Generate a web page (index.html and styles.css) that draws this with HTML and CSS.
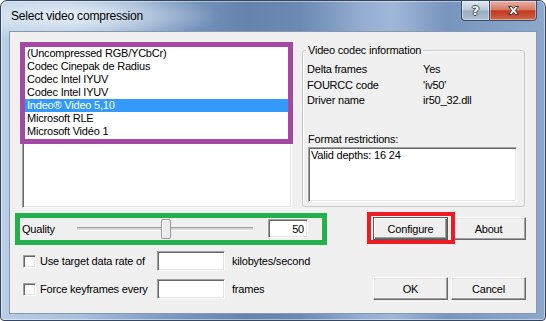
FILE: index.html
```html
<!DOCTYPE html>
<html lang="en">
<head>
  <meta charset="UTF-8">
  <title>Select video compression</title>
  <link rel="stylesheet" href="styles.css">
</head>
<body>

<div class="window">
  <div class="titlebar">
    <span class="title">Select video compression</span>
    <div class="caption-btns">
      <span class="cap help">?</span>
      <span class="cap close">
        <svg width="13" height="11" viewBox="0 0 13 11">
          <path d="M1.5 1.5 H4.8 L6.5 3.8 L8.2 1.5 H11.5 L8.3 5.5 L11.5 9.5 H8.2 L6.5 7.2 L4.8 9.5 H1.5 L4.7 5.5 Z" fill="#fff" stroke="#3b3b3b" stroke-width="1" stroke-linejoin="round"/>
        </svg>
      </span>
    </div>
  </div>

  <div class="client">
    <div class="top">
      <div class="list-wrap">
        <ul class="listbox">
          <li>(Uncompressed RGB/YCbCr)</li>
          <li>Codec Cinepak de Radius</li>
          <li>Codec Intel IYUV</li>
          <li>Codec Intel IYUV</li>
          <li class="selected">Indeo® Video 5,10</li>
          <li>Microsoft RLE</li>
          <li>Microsoft Vidéo 1</li>
        </ul>
        <div class="mark mark-purple"></div>
      </div>

      <fieldset class="group">
        <legend>Video codec information</legend>
        <div class="info">
          <span>Delta frames</span><span>Yes</span>
          <span>FOURCC code</span><span>'iv50'</span>
          <span>Driver name</span><span>ir50_32.dll</span>
        </div>
        <div class="restrict-label">Format restrictions:</div>
        <div class="restrict-box">Valid depths: 16 24</div>
      </fieldset>
    </div>

    <div class="mid">
      <div class="quality">
        <span class="q-label">Quality</span>
        <div class="slider">
          <div class="track"></div>
          <div class="thumb"></div>
        </div>
        <div class="edit num">50</div>
        <div class="mark mark-green"></div>
      </div>
      <div class="btn-row">
        <div class="configure-wrap">
          <button class="btn default">Configure</button>
          <div class="mark mark-red"></div>
        </div>
        <button class="btn">About</button>
      </div>
    </div>

    <div class="bottom">
      <div class="opts">
        <label class="chk"><span class="box"></span>Use target data rate of</label>
        <div class="edit"></div>
        <span class="unit">kilobytes/second</span>
        <label class="chk"><span class="box"></span>Force keyframes every</label>
        <div class="edit"></div>
        <span class="unit">frames</span>
      </div>
      <div class="btn-row end">
        <button class="btn">OK</button>
        <button class="btn">Cancel</button>
      </div>
    </div>
  </div>
</div>

</body>
</html>
```

FILE: styles.css
```css
body { margin: 0; background: #fff; font-family: "Liberation Sans", Arial, sans-serif; font-size: 11px; letter-spacing: -0.2px; color: #000; }

/* window frame */
.window {
  width: 544px; height: 319px; border: 1px solid #34465f; border-radius: 7px 7px 4px 4px;
  display: flex; flex-direction: column;
  background:
    radial-gradient(ellipse 150px 26px at 70px 15px, rgba(235,242,250,.95), rgba(235,242,250,0) 100%),
    linear-gradient(90deg, #b9cde5 0, #a9c0dd 14%, #7d9bc2 30%, #6583ad 45%, #6b89b2 55%, #93acd0 66%, #a0b8d8 72%, #7895bd 82%, #8ca8cb 100%);
  box-shadow: inset 0 0 0 1px rgba(255,255,255,.45);
}
.titlebar { height: 30px; display: flex; padding: 0 8px 0 10px; }
.title { font-size: 12px; line-height: 31px; color: #000; }
.caption-btns { margin-left: auto; margin-top: -1px; display: flex; height: 21px; }
.cap { height: 19px; display: flex; align-items: center; justify-content: center; border: 1px solid #3a4d68; box-shadow: inset 0 0 0 1px rgba(255,255,255,.4); }
.help {
  width: 27px; border-right: none; border-radius: 0 0 0 4px;
  background: linear-gradient(#dfe7f0, #bac8d8 48%, #9cadc3 52%, #adbdd0);
  color: #fff; font: bold 13px "DejaVu Sans", sans-serif;
  text-shadow: 1px 0 #404850, -1px 0 #404850, 0 1px #404850, 0 -1px #404850;
}
.close {
  width: 46px; border-radius: 0 0 4px 0;
  background: linear-gradient(#eab0a3, #d77d66 45%, #c1391f 52%, #d06448);
}

.client {
  flex: 1; margin: 0 8px 6px 8px; background: #f0f0f0; border: 1px solid #8797ad;
  padding: 12px 10px 0 12px;
}

/* annotation boxes drawn on top of the dialog */
.mark { position: absolute; pointer-events: none; }
.mark-purple { left: -2px; top: -2px; width: 263px; height: 92px; border: 5px solid #a349a4; }
.mark-green { left: -7px; top: -4px; width: 302px; height: 22px; border: 5px solid #22b14c; }
.mark-red { left: -6px; top: -5px; width: 80px; height: 24px; border: 4px solid #ed1c24; }

/* sunken edges */
.listbox, .restrict-box, .edit, .box {
  background: #fff;
  border-top: 1px solid #a0a0a0; border-left: 1px solid #a0a0a0;
  border-bottom: 1px solid #fff; border-right: 1px solid #fff;
  box-shadow: inset 1px 1px #696969, inset -1px -1px #e3e3e3;
}

.top { display: flex; gap: 10px; height: 164px; }
.list-wrap { position: relative; }
.listbox { margin: 0; list-style: none; box-sizing: border-box; width: 270px; height: 164px; padding: 2px; }
.listbox li { line-height: 13px; padding-left: 2px; white-space: nowrap; }
.listbox li.selected { background: #3399ff; color: #fff; }

.group {
  margin: 0; padding: 0 4px 4px; width: 223px; box-sizing: border-box; align-self: flex-start;
  border: 1px solid #c9c9c9; border-radius: 3px; box-shadow: inset 1px 1px #fff;
}
.group legend { padding: 0 2px; margin-left: -1px; line-height: 13px; }
.info { display: grid; grid-template-columns: 116px auto; line-height: 15.5px; margin-top: 5px; }
.restrict-label { margin-top: 24px; line-height: 13px; margin-left: 1px; }
.restrict-box { margin: 1.5px 0 0 1px; width: 209px; height: 55px; box-sizing: border-box; padding: 1px 2px; line-height: 13px; }

.mid { display: flex; justify-content: space-between; margin-top: 9px; height: 23px; }
.quality { position: relative; display: flex; align-items: center; }
.q-label { width: 55px; }
.slider { position: relative; width: 176px; height: 23px; margin-right: 15px; }
.track { position: absolute; left: 0; right: 0; top: 10px; height: 2px; border-top: 1px solid #a0a0a0; border-bottom: 1px solid #fff; background: #d6d6d6; }
.thumb { position: absolute; left: 84px; top: 2px; width: 8px; height: 18px; background: #ececec; border: 1px solid #9a9a9a; border-radius: 2px; box-shadow: inset 1px 1px #fff; }
.edit { width: 68px; height: 20px; box-sizing: border-box; }
.edit.num { width: 40px; height: 19px; text-align: right; padding: 2px 3px 0 0; line-height: 14px; }

.btn-row { display: flex; gap: 3px; }
.configure-wrap { position: relative; }
.btn {
  width: 75px; height: 23px; margin: 0; padding: 0; font: 11px "Liberation Sans", Arial, sans-serif; letter-spacing: -0.2px; color: #000;
  background: #f0f0f0; border-top: 1px solid #fff; border-left: 1px solid #fff;
  border-bottom: 1px solid #696969; border-right: 1px solid #696969;
  box-shadow: inset -1px -1px #a0a0a0, inset 1px 1px #e3e3e3;
}
.btn.default { border: 1px solid #5a5a5a; box-shadow: inset 1px 1px #fff, inset -1px -1px #696969, inset -2px -2px #a0a0a0; }

.bottom { display: flex; justify-content: space-between; align-items: flex-start; }
.opts { display: grid; grid-template-columns: 135px 68px auto; row-gap: 8px; grid-auto-rows: 20px; align-items: center; margin-top: 11px; }
.unit { margin-left: 7px; }
.chk { display: flex; align-items: center; }
.box { width: 13px; height: 13px; box-sizing: border-box; margin: 1px 4px 0 1px; }
.btn-row.end { margin-top: 37px; }
```
